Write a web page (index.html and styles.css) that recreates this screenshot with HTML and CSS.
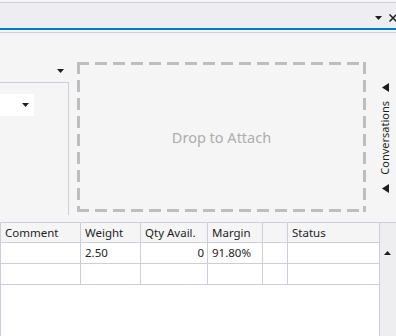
FILE: index.html
```html
<!DOCTYPE html>
<html lang="en">
<head>
	<meta charset="UTF-8">
	<title>Attach</title>
	<link rel="stylesheet" href="styles.css">
</head>
<body>
	<div class="topbar">
		<div class="tools">
			<svg class="menu-arrow" width="7" height="4" viewBox="0 0 7 4"><polygon points="0,0 7,0 3.5,4" fill="#1e1e1e"/></svg>
			<svg class="close" width="8" height="8" viewBox="0 0 8 8"><path d="M0.5 0.5 L7.5 7.5 M7.5 0.5 L0.5 7.5" stroke="#1e1e1e" stroke-width="1.5"/></svg>
		</div>
	</div>
	<div class="rule"></div>

	<div class="main">
		<div class="left">
			<div class="filter">
				<svg width="7" height="4" viewBox="0 0 7 4"><polygon points="0,0 7,0 3.5,4" fill="#1e1e1e"/></svg>
			</div>
			<div class="panel">
				<div class="combo">
					<svg width="7" height="4" viewBox="0 0 7 4"><polygon points="0,0 7,0 3.5,4" fill="#1e1e1e"/></svg>
				</div>
			</div>
		</div>
		<div class="drop">Drop to Attach</div>
		<div class="sidetab">
			<svg width="7" height="9" viewBox="0 0 7 9"><polygon points="7,0 7,9 0,4.5" fill="#1e1e1e"/></svg>
			<span class="sidelabel">Conversations</span>
			<svg width="7" height="9" viewBox="0 0 7 9"><polygon points="7,0 7,9 0,4.5" fill="#1e1e1e"/></svg>
		</div>
	</div>

	<div class="grid">
		<div class="cell head">Comment</div>
		<div class="cell head">Weight</div>
		<div class="cell head">Qty Avail.</div>
		<div class="cell head">Margin</div>
		<div class="cell head"></div>
		<div class="cell head">Status</div>
		<div class="scroll">
			<svg width="7" height="4" viewBox="0 0 7 4"><polygon points="0,4 7,4 3.5,0" fill="#1e1e1e"/></svg>
		</div>

		<div class="cell"></div>
		<div class="cell">2.50</div>
		<div class="cell num">0</div>
		<div class="cell">91.80%</div>
		<div class="cell"></div>
		<div class="cell"></div>

		<div class="cell"></div>
		<div class="cell"></div>
		<div class="cell"></div>
		<div class="cell"></div>
		<div class="cell"></div>
		<div class="cell"></div>

		<div class="empty"></div>
	</div>
</body>
</html>
```

FILE: styles.css
```css
body{
	margin: 0;
	background: #f5f5f6;
	font-family: "Segoe UI", "Noto Sans", sans-serif;
	font-size: 11.5px;
	color: #1e1e1e;
	overflow: hidden;
}
/* tab strip */
.topbar{
	margin-top: 2px;
	height: 25px;
	background: #eeeef2;
	border-top: 1px solid #ccceDB;
	border-bottom: 2px solid #007acc;
}
.tools{
	display: flex;
	justify-content: flex-end;
	align-items: center;
	gap: 7px;
	height: 100%;
	padding-top: 4px;
	box-sizing: border-box;
	margin-right: -1px;
}
.tools svg{
	display: block;
}
.rule{
	margin-top: 2px;
	height: 1px;
	background: #ccceDB;
}

/* middle area */
.main{
	display: flex;
	height: 189px;
}
.left{
	width: 69px;
}
.filter{
	height: 49px;
	display: flex;
	justify-content: flex-end;
	padding: 36px 5px 0 0;
	box-sizing: border-box;
}
.filter svg, .combo svg, .scroll svg{
	display: block;
}
.panel{
	height: 133px;
	border-top: 1px solid #ccceDB;
	border-right: 1px solid #ccceDB;
	box-sizing: border-box;
	padding-top: 11px;
}
.combo{
	width: 34px;
	height: 22px;
	background: #fff;
	display: flex;
	justify-content: flex-end;
	align-items: center;
	padding-right: 5px;
	box-sizing: border-box;
}
.drop{
	width: 289px;
	height: 150px;
	margin: 29px 0 0 8px;
	display: flex;
	align-items: center;
	justify-content: center;
	font-size: 14.5px;
	color: #adadad;
	background:
		repeating-linear-gradient(90deg, #bebebe 0 12px, transparent 12px 18px) left top / 100% 3px no-repeat,
		repeating-linear-gradient(90deg, #bebebe 0 12px, transparent 12px 18px) left bottom / 100% 3px no-repeat,
		repeating-linear-gradient(180deg, #bebebe 0 12px, transparent 12px 18px) left top / 3px 100% no-repeat,
		repeating-linear-gradient(180deg, #bebebe 0 12px, transparent 12px 18px) right top / 3px 100% no-repeat;
}
.sidetab{
	width: 30px;
	padding: 50px 0 0 8px;
	box-sizing: border-box;
	display: flex;
	flex-direction: column;
	align-items: center;
	gap: 9px;
}
.sidetab svg{
	display: block;
}
.sidelabel{
	writing-mode: vertical-rl;
	transform: rotate(180deg);
	line-height: 14px;
	font-size: 11px;
}

/* data grid */
.grid{
	display: grid;
	grid-template-columns: 80px 60px 67px 55px 25px 92px 16px;
	grid-template-rows: 20px 21px 21px 1fr;
	height: 114px;
	border-top: 1px solid #ccceDB;
	border-left: 1px solid #ccceDB;
	box-sizing: border-box;
	background: #fff;
}
.cell{
	border-right: 1px solid #ccceDB;
	border-bottom: 1px solid #ccceDB;
	padding: 0 4px;
	line-height: 20px;
	white-space: nowrap;
	overflow: hidden;
}
.head{
	background: #f5f5f6;
	line-height: 19px;
}
.num{
	text-align: right;
	padding-right: 3px;
}
.scroll{
	grid-column: 7;
	grid-row: 1 / 5;
	background: #eeeef1;
	padding: 28px 0 0 4px;
}
.empty{
	grid-column: 1 / 7;
	border-right: 1px solid #ccceDB;
}
```
